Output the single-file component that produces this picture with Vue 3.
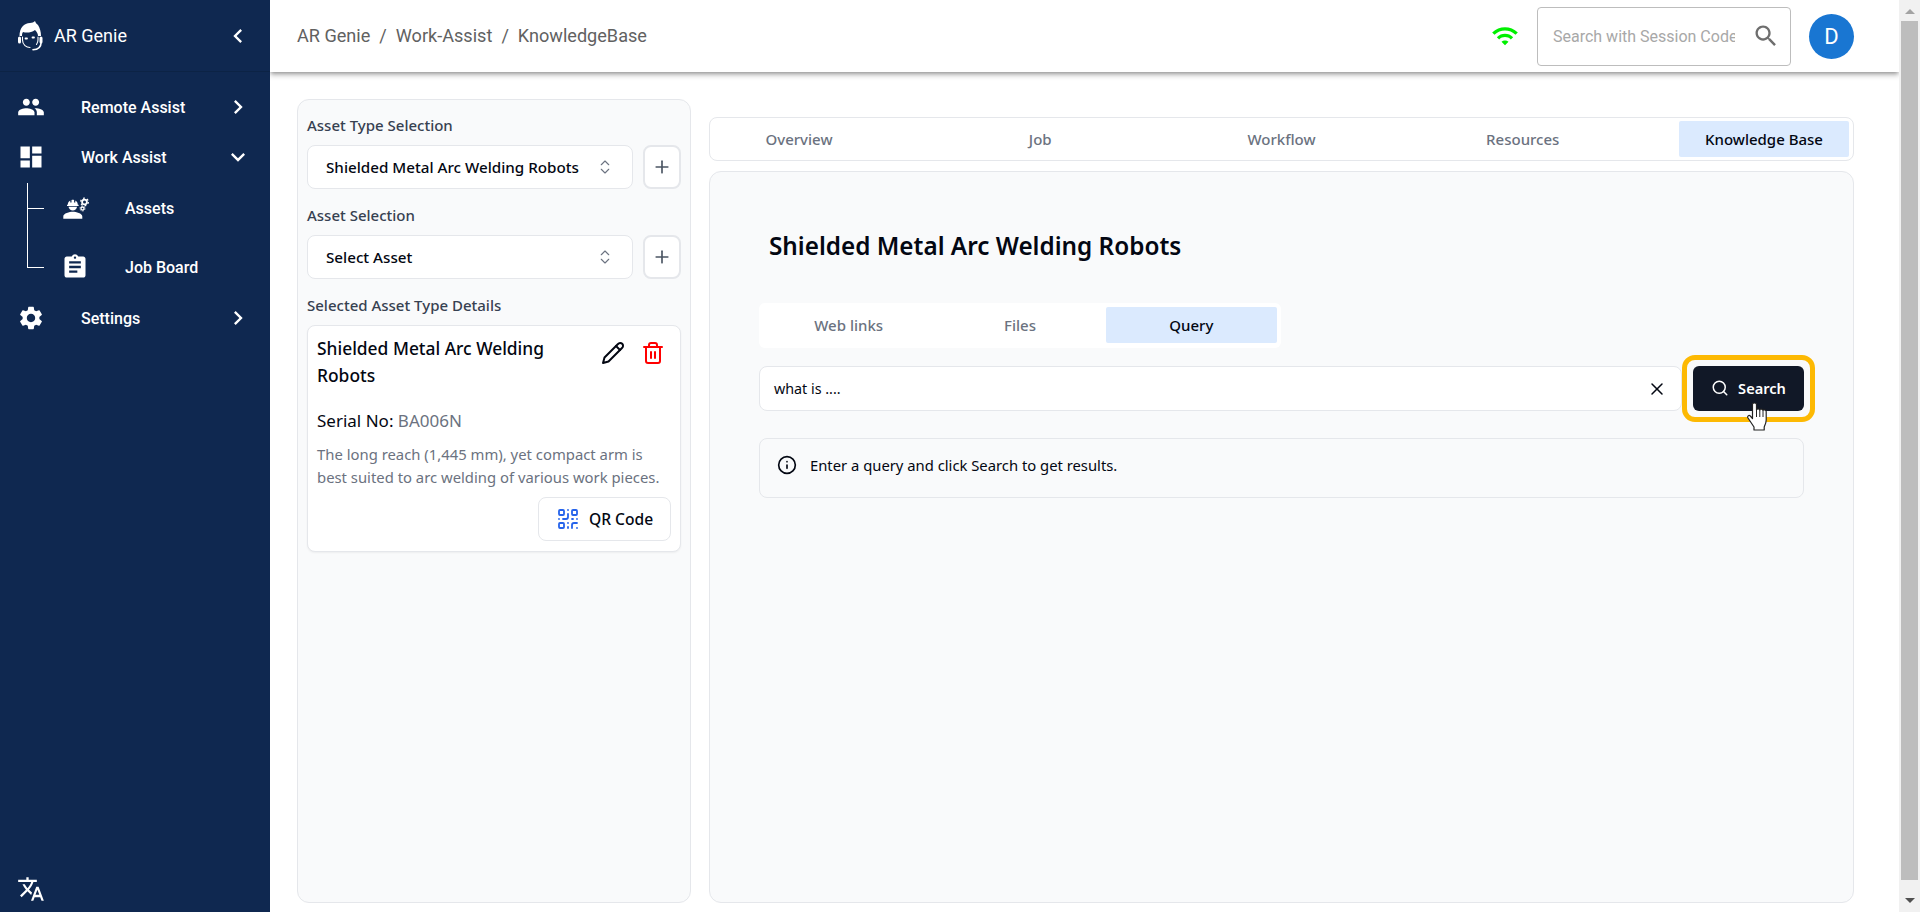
<script setup>
const tabs = ['Overview', 'Job', 'Workflow', 'Resources', 'Knowledge Base']
const subTabs = ['Web links', 'Files', 'Query']
</script>

<template>
  <div class="page">
    <aside class="sidebar">
      <div class="brand">
        <svg class="logo" width="28" height="32" viewBox="0 0 28 32" fill="none" stroke="#fff" stroke-linecap="round">
          <path d="M3.5 16C3.500 8 8 3 14 3c2 0 4-1 5-2 .5 2 2 3 3 4 2 3 3 7 3 11h-3c0-2-1-4-3-6-4 3-9 3-12 2-1 1-1 3-1 4z" fill="#fff" stroke="none"/>
          <path d="M6.500 17v3c0 5 4 7.500 7.500 7.500" stroke-width="1.100"/>
          <path d="M22 17v3c0 2-.5 3-1.500 4.500" stroke-width="1.100"/>
          <rect x="2" y="16.500" width="3" height="7" rx="1.500" fill="#fff" stroke="none"/>
          <rect x="23.500" y="16.500" width="3" height="7" rx="1.500" fill="#fff" stroke="none"/>
          <path d="M25 23c0 4-3 6.500-8 6.800" stroke-width="1.600"/>
          <path d="M9.500 18.500h1.500M16.500 17.500h1.500" stroke-width="1.800"/>
        </svg>
        <span class="brand-name">AR Genie</span>
        <svg class="chev" viewBox="0 0 24 24"><path d="M15.410 7.410 14 6l-6 6 6 6 1.410-1.410L10.830 12z"/></svg>
      </div>
      <nav class="nav">
        <div class="nav-row">
          <svg class="nav-icon" viewBox="0 0 24 24"><path d="M16 11c1.660 0 2.990-1.340 2.990-3S17.660 5 16 5c-1.660 0-3 1.340-3 3s1.340 3 3 3zm-8 0c1.660 0 2.990-1.340 2.990-3S9.660 5 8 5C6.340 5 5 6.340 5 8s1.340 3 3 3zm0 2c-2.330 0-7 1.170-7 3.500V19h14v-2.500c0-2.330-4.670-3.500-7-3.500zm8 0c-.290 0-.620.020-.970.050 1.160.840 1.970 1.970 1.970 3.450V19h6v-2.500c0-2.330-4.670-3.500-7-3.500z"/></svg>
          <span class="nav-label">Remote Assist</span>
          <svg class="chev" viewBox="0 0 24 24"><path d="M10 6 8.590 7.410 13.170 12l-4.580 4.590L10 18l6-6z"/></svg>
        </div>
        <div class="nav-row">
          <svg class="nav-icon" viewBox="0 0 24 24"><path d="M3 13h8V3H3v10zm0 8h8v-6H3v6zm10 0h8V11h-8v10zm0-18v6h8V3h-8z"/></svg>
          <span class="nav-label">Work Assist</span>
          <svg class="chev" viewBox="0 0 24 24"><path d="M16.590 8.590 12 13.170 7.410 8.590 6 10l6 6 6-6z"/></svg>
        </div>
        <div class="sub">
          <div class="sub-row first">
            <svg class="sub-icon" viewBox="0 0 28 24" fill="#fff">
              <g transform="translate(1.800 .3)">
                <path d="M10 15.500c-3.300 0-9.500 1.600-9.500 4.700v2.300h19v-2.300c0-3.100-6.200-4.700-9.500-4.700z"/>
                <path d="M4.200 8.500h.8c0-2 1.100-3.500 2.500-4.200v2h1.200V3.700c.5-.1 1-.2 1.300-.2s.8.100 1.300.2v2.600h1.200v-2c1.400.7 2.500 2.200 2.500 4.200h.8v1.200H4.200z"/>
                <path d="M5.700 10.500h8.600c-.4 2.100-2.200 3.700-4.300 3.700s-3.900-1.600-4.300-3.700z"/>
              </g>
              <circle cx="23.500" cy="6" r="2.400" fill="none" stroke="#fff" stroke-width="1.800"/>
              <circle cx="23.500" cy="6" r="3.800" fill="none" stroke="#fff" stroke-width="1.300" stroke-dasharray="1.800 2.200"/>
              <circle cx="21.500" cy="12.500" r="1.500" fill="none" stroke="#fff" stroke-width="1.300"/>
              <circle cx="21.500" cy="12.500" r="2.500" fill="none" stroke="#fff" stroke-width="1" stroke-dasharray="1.300 1.300"/>
            </svg>
            <span class="sub-label">Assets</span>
          </div>
          <div class="sub-row">
            <svg class="sub-icon" viewBox="0 0 24 24" fill="#fff"><path d="M19 3h-4.180C14.400 1.840 13.300 1 12 1c-1.300 0-2.400.840-2.820 2H5c-1.100 0-2 .900-2 2v14c0 1.100.900 2 2 2h14c1.100 0 2-.900 2-2V5c0-1.100-.900-2-2-2zm-7 0c.550 0 1 .450 1 1s-.450 1-1 1-1-.450-1-1 .450-1 1-1zm2 14H7v-2h7v2zm3-4H7v-2h10v2zm0-4H7V7h10v2z"/></svg>
            <span class="sub-label">Job Board</span>
          </div>
        </div>
        <div class="nav-row">
          <svg class="nav-icon" viewBox="0 0 24 24"><path d="M19.140 12.940c.040-.300.060-.610.060-.940 0-.320-.020-.640-.070-.940l2.030-1.580c.180-.140.230-.410.120-.610l-1.920-3.320c-.120-.220-.370-.290-.590-.220l-2.390.960c-.500-.380-1.030-.700-1.620-.940l-.360-2.540c-.040-.240-.240-.410-.480-.410h-3.840c-.240 0-.430.170-.470.410l-.360 2.540c-.590.240-1.130.570-1.620.940l-2.390-.960c-.220-.080-.470 0-.590.220L2.740 8.870c-.120.210-.080.470.120.610l2.030 1.580c-.050.300-.090.630-.090.940s.020.640.070.940l-2.030 1.580c-.180.140-.230.410-.120.610l1.920 3.320c.120.220.370.290.590.220l2.390-.960c.500.380 1.030.700 1.620.940l.360 2.540c.050.240.240.410.480.410h3.840c.240 0 .440-.170.470-.410l.360-2.540c.590-.240 1.130-.560 1.620-.940l2.390.960c.220.080.470 0 .590-.220l1.920-3.320c.120-.220.070-.470-.120-.610l-2.010-1.580zM12 15.600c-1.980 0-3.600-1.620-3.600-3.600s1.620-3.600 3.600-3.600 3.600 1.620 3.600 3.600-1.620 3.600-3.600 3.600z"/></svg>
          <span class="nav-label">Settings</span>
          <svg class="chev" viewBox="0 0 24 24"><path d="M10 6 8.590 7.410 13.170 12l-4.580 4.590L10 18l6-6z"/></svg>
        </div>
      </nav>
      <svg class="translate" viewBox="0 0 24 24"><path d="M12.870 15.070l-2.540-2.510.030-.030c1.740-1.940 2.980-4.170 3.710-6.530H17V4h-7V2H8v2H1v1.990h11.170C11.500 7.920 10.440 9.750 9 11.350 8.070 10.320 7.300 9.190 6.690 8h-2c.730 1.630 1.730 3.170 2.980 4.560l-5.090 5.020L4 19l5-5 3.110 3.110.760-2.040zM18.500 10h-2L12 22h2l1.120-3h4.750L21 22h2l-4.500-12zm-2.620 7l1.620-4.330L19.120 17h-3.240z"/></svg>
    </aside>

    <div class="main">
      <header class="topbar">
        <div class="crumbs">
          <span>AR Genie</span><span class="sep">/</span><span>Work-Assist</span><span class="sep">/</span><span>KnowledgeBase</span>
        </div>
        <svg class="wifi" viewBox="0 0 24 24"><path d="M1 9l2 2c4.970-4.970 13.030-4.970 18 0l2-2C16.930 2.930 7.080 2.930 1 9zm8 8l3 3 3-3c-1.650-1.660-4.340-1.660-6 0zm-4-4l2 2c2.760-2.760 7.240-2.760 10 0l2-2C15.140 9.140 8.870 9.140 5 13z"/></svg>
        <div class="session">
          <span class="session-ph">Search with Session Code</span>
          <svg class="session-icon" viewBox="0 0 24 24"><path d="M15.500 14h-.790l-.280-.270C15.410 12.590 16 11.110 16 9.500 16 5.910 13.090 3 9.500 3S3 5.910 3 9.500 5.910 16 9.500 16c1.610 0 3.090-.590 4.230-1.570l.270.280v.790l5 4.990L20.490 19l-4.990-5zm-6 0C7.010 14 5 11.990 5 9.500S7.010 5 9.500 5 14 7.010 14 9.500 11.990 14 9.500 14z"/></svg>
        </div>
        <div class="avatar">D</div>
      </header>

      <div class="content">
        <section class="left">
          <div class="field-label">Asset Type Selection</div>
          <div class="select-row">
            <div class="select">
              <span>Shielded Metal Arc Welding Robots</span>
              <svg class="lucide updown" viewBox="0 0 24 24"><path d="m7 15 5 5 5-5"/><path d="m7 9 5-5 5 5"/></svg>
            </div>
            <div class="plus"><svg class="lucide" viewBox="0 0 24 24"><path d="M5 12h14"/><path d="M12 5v14"/></svg></div>
          </div>
          <div class="field-label second">Asset Selection</div>
          <div class="select-row">
            <div class="select">
              <span>Select Asset</span>
              <svg class="lucide updown" viewBox="0 0 24 24"><path d="m7 15 5 5 5-5"/><path d="m7 9 5-5 5 5"/></svg>
            </div>
            <div class="plus"><svg class="lucide" viewBox="0 0 24 24"><path d="M5 12h14"/><path d="M12 5v14"/></svg></div>
          </div>
          <div class="field-label second">Selected Asset Type Details</div>
          <div class="card">
            <div class="card-head">
              <div class="card-title">Shielded Metal Arc Welding Robots</div>
              <svg class="lucide pencil" viewBox="0 0 24 24"><path d="M17 3a2.850 2.830 0 1 1 4 4L7.500 20.500 2 22l1.500-5.500Z"/><path d="m15 5 4 4"/></svg>
              <svg class="lucide trash" viewBox="0 0 24 24"><path d="M3 6h18"/><path d="M19 6v14c0 1-1 2-2 2H7c-1 0-2-1-2-2V6"/><path d="M8 6V4c0-1 1-2 2-2h4c1 0 2 1 2 2v2"/><path d="M10 11v6"/><path d="M14 11v6"/></svg>
            </div>
            <div class="serial">Serial No: <span>BA006N</span></div>
            <p class="desc">The long reach (1,445 mm), yet compact arm is best suited to arc welding of various work pieces.</p>
            <div class="card-foot">
              <div class="qr">
                <svg class="lucide qr-icon" viewBox="0 0 24 24"><rect x="3" y="3" width="5" height="5" rx="1"/><rect x="16" y="3" width="5" height="5" rx="1"/><rect x="3" y="16" width="5" height="5" rx="1"/><path d="M21 16h-3a2 2 0 0 0-2 2v3"/><path d="M21 21v.010"/><path d="M12 7v3a2 2 0 0 1-2 2H7"/><path d="M3 12h.010"/><path d="M12 3h.010"/><path d="M12 16v.010"/><path d="M16 12h1"/><path d="M21 12v.010"/><path d="M12 21v-1"/></svg>
                <span>QR Code</span>
              </div>
            </div>
          </div>
        </section>

        <section class="right">
          <div class="tabs">
            <div v-for="t in tabs" :key="t" class="tab" :class="{ active: t === 'Knowledge Base' }">{{ t }}</div>
          </div>
          <div class="panel">
            <h1 class="heading">Shielded Metal Arc Welding Robots</h1>
            <div class="subtabs">
              <div v-for="t in subTabs" :key="t" class="tab" :class="{ active: t === 'Query' }">{{ t }}</div>
            </div>
            <div class="query-row">
              <div class="query">
                <span>what is ....</span>
                <svg class="lucide clear" viewBox="0 0 24 24"><path d="M18 6 6 18"/><path d="m6 6 12 12"/></svg>
              </div>
              <div class="search-btn">
                <svg class="lucide btn-icon" viewBox="0 0 24 24"><circle cx="11" cy="11" r="8"/><path d="m21 21-4.300-4.300"/></svg>
                <span>Search</span>
                <svg class="hand" width="22" height="30" viewBox="0 0 22 30">
                  <path d="M5.500 2.500c0-2 4-2 4 0V8c0-1.500 3.200-1.500 3.300 0 0-1.300 3-1.300 3.200.5 .2-1 3-.8 3.200 1V18c0 3-1 5-2 7v3H7v-3C5 22 3 19 1 16c-1-1.600 .8-3.300 2.300-2l2.200 2.500z" fill="#fff" stroke="#222" stroke-width="1.200" stroke-linejoin="round"/>
                  <path d="M9.500 8v7M12.800 8v7M16 8.500V15" stroke="#222" stroke-width="1" fill="none"/>
                </svg>
              </div>
            </div>
            <div class="info">
              <svg class="lucide info-icon" viewBox="0 0 24 24"><circle cx="12" cy="12" r="10"/><path d="M12 16v-4"/><path d="M12 8h.010"/></svg>
              <span>Enter a query and click Search to get results.</span>
            </div>
          </div>
        </section>
      </div>
    </div>

    <div class="scrollbar">
      <div class="arrow up"></div>
      <div class="thumb"></div>
      <div class="arrow down"></div>
    </div>
  </div>
</template>

<style>
html, body { margin: 0; padding: 0; overflow: hidden; }
</style>

<style scoped>
.page {
  display: flex;
  width: 1920px;
  height: 912px;
  overflow: hidden;
  background: #fff;
  font-family: "Noto Sans", "Open Sans", sans-serif;
  color: #030712;
}
.sidebar {
  width: 270px;
  flex: none;
  background: #0f2850;
  color: #fff;
  display: flex;
  flex-direction: column;
  font-family: Roboto, sans-serif;
  position: relative;
  z-index: 2;
}
.brand {
  height: 72px;
  box-sizing: border-box;
  display: flex;
  align-items: center;
  border-bottom: 1px solid #0c2345;
  padding-left: 16px;
  padding-right: 18px;
}
.brand-name { font-size: 18px; flex: 1; margin-left: 10px; }
.chev { width: 28px; height: 28px; fill: #fff; flex: none; }
.nav { padding-top: 10px; }
.nav-row {
  height: 50px;
  display: flex;
  align-items: center;
  padding-left: 17px;
  padding-right: 18px;
}
.nav-icon { width: 28px; height: 28px; fill: #fff; flex: none; }
.nav-label { flex: 1; margin-left: 36px; font-size: 16px; font-weight: 500; }
.sub { position: relative; display: flex; flex-direction: column; gap: 7px; }
.sub::before {
  content: "";
  position: absolute;
  left: 27px;
  top: 1px;
  height: 85px;
  width: 1px;
  background: #fff;
}
.sub-row {
  position: relative;
  height: 52px;
  display: flex;
  align-items: center;
  padding-left: 61px;
}
.sub-row::before {
  content: "";
  position: absolute;
  left: 27px;
  top: 26px;
  width: 17px;
  height: 1px;
  background: #fff;
}
.sub-icon { width: 28px; height: 28px; flex: none; }
.sub-label { margin-left: 36px; font-size: 16px; font-weight: 500; }
.translate { width: 28px; height: 28px; fill: #fff; margin: auto 0 9px 17px; }

.main { flex: 1; min-width: 0; display: flex; flex-direction: column; }
.topbar {
  height: 72px;
  flex: none;
  box-sizing: border-box;
  display: flex;
  align-items: center;
  padding: 0 45px 0 27px;
  background: #fff;
  box-shadow: 0 2px 4px -1px rgba(0,0,0,.35), 0 4px 5px 0 rgba(0,0,0,.16);
  position: relative;
  z-index: 1;
}
.crumbs {
  flex: 1;
  font-family: Roboto, sans-serif;
  font-size: 18.1px;
  color: #616161;
  display: flex;
  padding-bottom: 2px;
}
.sep { margin: 0 9px; }
.wifi { width: 28px; height: 28px; fill: #00f000; flex: none; margin-right: 18px; }
.session {
  width: 254px;
  height: 59px;
  box-sizing: border-box;
  border: 1px solid #bdbdbd;
  border-radius: 4px;
  display: flex;
  align-items: center;
  padding-left: 15px;
  padding-right: 10px;
  flex: none;
}
.session-ph {
  width: 182px;
  overflow: hidden;
  white-space: nowrap;
  font-family: Roboto, sans-serif;
  font-size: 16px;
  color: #a8a8a8;
}
.session-icon { width: 28px; height: 28px; fill: #6e6e6e; margin-left: auto; }
.avatar {
  width: 45px;
  height: 45px;
  border-radius: 50%;
  background: #1976d2;
  color: #fff;
  font-family: Roboto, sans-serif;
  font-size: 22px;
  display: flex;
  align-items: center;
  justify-content: center;
  margin-left: 18px;
  flex: none;
}

.content {
  flex: 1;
  min-height: 0;
  display: flex;
  gap: 18px;
  padding: 27px 45px 9px 27px;
}
.left {
  width: 394px;
  flex: none;
  box-sizing: border-box;
  background: #f9fafb;
  border: 1px solid #e5e7eb;
  border-radius: 12px;
  padding: 15px 9px 0;
}
.field-label { font-size: 15px; font-weight: 500; color: #374151; line-height: 20px; }
.second { margin-top: 16px; }
.select-row { display: flex; gap: 10px; margin-top: 10px; }
.select {
  flex: 1;
  height: 44px;
  box-sizing: border-box;
  background: #fff;
  border: 1px solid #e5e7eb;
  border-radius: 8px;
  display: flex;
  align-items: center;
  justify-content: space-between;
  padding: 0 18px;
  font-size: 15.2px;
  font-weight: 500;
}
.lucide {
  width: 20px;
  height: 20px;
  fill: none;
  stroke: currentColor;
  stroke-width: 2;
  stroke-linecap: round;
  stroke-linejoin: round;
  flex: none;
}
.updown { width: 18px; height: 18px; color: #6b7280; stroke-width: 1.500; }
.plus {
  width: 38px;
  height: 44px;
  box-sizing: border-box;
  background: #fff;
  border: 2px solid #e5e7eb;
  border-radius: 8px;
  display: flex;
  align-items: center;
  justify-content: center;
  color: #4b5563;
  flex: none;
}
.card {
  margin-top: 10px;
  background: #fff;
  border: 1px solid #e5e7eb;
  border-radius: 8px;
  box-shadow: 0 1px 2px rgba(0,0,0,.05);
  padding: 9px 9px 10px;
}
.card-head { display: flex; align-items: flex-start; }
.card-title { flex: 1; font-size: 17.4px; font-weight: 500; line-height: 27px; padding-bottom: 20px; }
.pencil { width: 24px; height: 24px; margin: 6px 0 0 16px; }
.trash { width: 24px; height: 24px; margin: 6px 6px 0 16px; color: #f00; }
.serial { font-size: 17px; line-height: 24px; }
.serial span { color: #6b7280; }
.desc { margin: 10px 0 0; font-size: 14.85px; line-height: 23px; color: #6b7280; }
.card-foot { display: flex; justify-content: flex-end; margin-top: 8px; }
.qr {
  width: 133px;
  height: 44px;
  box-sizing: border-box;
  border: 1px solid #e5e7eb;
  border-radius: 8px;
  display: flex;
  align-items: center;
  justify-content: center;
  gap: 9px;
  font-size: 15.6px;
  font-weight: 500;
}
.qr-icon { width: 24px; height: 24px; color: #2563eb; stroke-width: 1.800; }

.right { flex: 1; min-width: 0; display: flex; flex-direction: column; gap: 10px; padding-top: 18px; }
.tabs {
  height: 44px;
  flex: none;
  box-sizing: border-box;
  border: 1px solid #e5e7eb;
  border-radius: 8px;
  display: flex;
  justify-content: space-between;
  align-items: center;
  padding: 0 4px;
  background: #fff;
}
.tab {
  width: 170px;
  height: 36px;
  border-radius: 2px;
  display: flex;
  align-items: center;
  justify-content: center;
  font-size: 15px;
  font-weight: 500;
  color: #6b7280;
}
.tab.active { background: #dbeafe; color: #030712; }
.panel {
  flex: 1;
  min-height: 0;
  box-sizing: border-box;
  background: #f9fafb;
  border: 1px solid #e5e7eb;
  border-radius: 12px;
  padding: 0 49px;
}
.heading {
  margin: 54px 0 0 10px;
  font-size: 24.3px;
  font-weight: 600;
  line-height: 40px;
}
.subtabs {
  width: 522px;
  height: 45px;
  box-sizing: border-box;
  margin-top: 37px;
  padding: 4px;
  background: #fff;
  border-radius: 6px;
  display: grid;
  grid-template-columns: repeat(3, 1fr);
}
.subtabs .tab { width: auto; }
.query-row { display: flex; gap: 11px; margin-top: 18px; position: relative; }
.query {
  flex: 1;
  height: 45px;
  box-sizing: border-box;
  background: #fff;
  border: 1px solid #e5e7eb;
  border-radius: 8px;
  display: flex;
  align-items: center;
  justify-content: space-between;
  padding: 0 14px;
  font-size: 14.3px;
}
.clear { width: 20px; height: 20px; stroke-width: 1.800; }
.search-btn {
  width: 111px;
  height: 45px;
  box-sizing: border-box;
  background: #111827;
  color: #fff;
  border-radius: 6px;
  padding-bottom: 2px;
  display: flex;
  align-items: center;
  justify-content: center;
  gap: 9px;
  font-size: 14.6px;
  font-weight: 600;
  flex: none;
  position: relative;
}
.btn-icon { width: 18px; height: 18px; }
.search-btn::after {
  content: "";
  position: absolute;
  inset: -11px;
  border: 5px solid #fdb903;
  border-radius: 13px;
  box-sizing: border-box;
}
.hand { position: absolute; left: 54px; top: 36px; z-index: 2; }
.info {
  margin-top: 27px;
  height: 60px;
  box-sizing: border-box;
  border: 1px solid #e5e7eb;
  border-radius: 8px;
  display: flex;
  align-items: center;
  gap: 13px;
  padding-left: 17px;
  padding-bottom: 7px;
  font-size: 14.8px;
}
.scrollbar {
  width: 21px;
  flex: none;
  background: #f1f1f1;
  display: flex;
  flex-direction: column;
  align-items: center;
  position: relative;
  z-index: 2;
}
.arrow { flex: none; width: 0; height: 0; border-left: 5px solid transparent; border-right: 5px solid transparent; }
.arrow.up { border-bottom: 5px solid #a3a3a3; margin: 9px 0 7px; }
.arrow.down { border-top: 5px solid #505050; margin: 18px 0 9px; }
.thumb { flex: 1; width: 17px; background: #bdbdbd; }
</style>
